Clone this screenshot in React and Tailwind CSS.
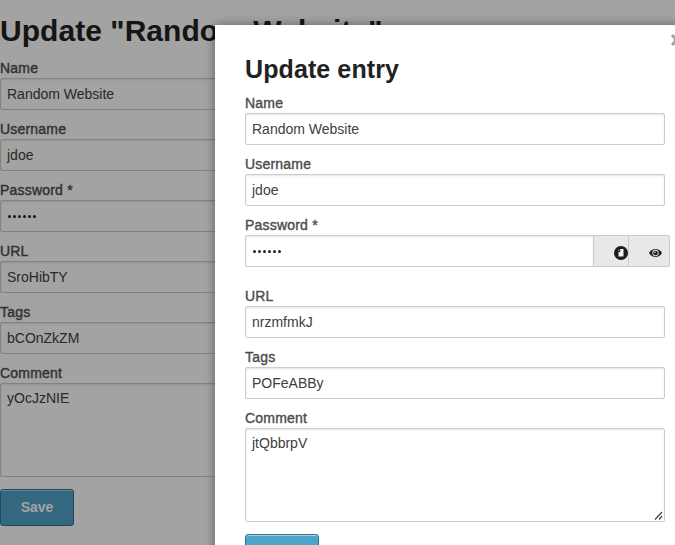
import React from "react";

const box =
  "border border-[#ccc] rounded-[2px] shadow-[inset_0_1px_2px_rgba(0,0,0,0.1)] bg-white text-[14px] leading-[17px] text-[#404040] px-1.5";

function Label({ children }) {
  return (
    <div className="h-[17px] whitespace-nowrap text-[14px] leading-[15px] tracking-[0.2px] text-[#4d4d4d] [-webkit-text-stroke:0.4px_#4d4d4d]">
      {children}
    </div>
  );
}

function Dots() {
  return (
    <div className="flex gap-[2px] pl-px">
      {[0, 1, 2, 3, 4, 5].map((i) => (
        <span key={i} className="size-[3px] rounded-full bg-[#222]" />
      ))}
    </div>
  );
}

function Field({ label, children }) {
  return (
    <div className="mb-3">
      <Label>{label}</Label>
      <div className={box + " flex h-8 items-center"}>{children}</div>
    </div>
  );
}

function Comment({ value, grip }) {
  return (
    <div className="mb-3">
      <Label>Comment</Label>
      <div className={box + " relative h-[94px] pt-[6px]"}>
        {value}
        {grip && (
          <svg className="absolute right-px bottom-px" width="9" height="9" viewBox="0 0 9 9" stroke="#444" strokeWidth="1.2" fill="none">
            <path d="M1 8.5 8 1M5 8.5 8 5" />
          </svg>
        )}
      </div>
    </div>
  );
}

function SaveButton({ textClass = "" }) {
  return (
    <button className={"block h-[37px] w-[74px] rounded-[3px] border border-[#33718f] bg-[#50a3c8] pb-px text-[14px] leading-[14px] font-bold text-white shadow-[inset_0_1px_0_rgba(255,255,255,0.5)] " + textClass}>
      Save
    </button>
  );
}

function CopyIcon() {
  return (
    <svg className="shrink-0" width="14" height="14" viewBox="0 0 14 14">
      <circle cx="7" cy="7" r="7" fill="#1c1c1c" />
      <path d="M6.2 3H9.5V10.5H4.5V6H6.2Z" fill="#f0f0f0" />
      <path d="M3.8 4.8 5.2 3.4V4.8Z" fill="#f0f0f0" />
    </svg>
  );
}

function EyeIcon() {
  return (
    <svg className="shrink-0" width="13" height="8" viewBox="0 0 13 8">
      <path d="M0 4C1.5 1.4 3.8 0 6.5 0S11.5 1.4 13 4C11.5 6.6 9.2 8 6.5 8S1.5 6.6 0 4Z" fill="#1c1c1c" />
      <circle cx="6.5" cy="4" r="3.2" fill="#e8e8e8" />
      <circle cx="6.5" cy="4" r="2.3" fill="#1c1c1c" />
      <circle cx="6" cy="3.3" r="0.8" fill="#ddd" />
    </svg>
  );
}

export default function App() {
  return (
    <div className="relative h-[545px] w-[675px] overflow-hidden bg-white font-['Liberation_Sans',Arial,sans-serif]">
      <main className="pt-[10px]">
        <h1 className="h-[51px] whitespace-nowrap text-[30px] leading-[42px] font-bold tracking-[0.05px] text-[#222]">
          Update "Random Website"
        </h1>
        <Field label="Name">Random Website</Field>
        <Field label="Username">jdoe</Field>
        <Field label="Password *"><Dots /></Field>
        <Field label="URL">SroHibTY</Field>
        <Field label="Tags">bCOnZkZM</Field>
        <Comment value="yOcJzNIE" />
        <SaveButton />
      </main>

      <div className="absolute inset-0 bg-black/36" />

      <section className="absolute top-[25px] left-[215px] h-[600px] w-[520px] bg-white pt-[27px] pl-[30px] shadow-[0_0_10px_rgba(0,0,0,0.4)]">
        <svg className="absolute top-[9px] left-[456px]" width="11" height="12" viewBox="0 0 11 12" stroke="#a3a3a3" strokeWidth="3.2" strokeLinecap="round">
          <path d="M2 2 9 10M9 2 2 10" />
        </svg>
        <div className="w-[420px]">
          <h2 className="h-[44px] text-[25px] leading-[35px] font-bold tracking-[0.1px] text-[#222]">Update entry</h2>
          <Field label="Name">Random Website</Field>
          <Field label="Username">jdoe</Field>
          <div className="mb-[22px]">
            <Label>Password *</Label>
            <div className="flex h-8 w-[425px]">
              <div className={box + " flex w-[349px] items-center rounded-r-none"}><Dots /></div>
              <div className="-ml-px flex w-9 items-center justify-end border border-[#ccc] bg-[#e8e8e8] pt-[3px]">
                <CopyIcon />
              </div>
              <div className="-ml-px flex w-[42px] items-center justify-end rounded-r-[2px] border border-[#ccc] bg-[#e8e8e8] pt-[3px] pr-[7px]">
                <EyeIcon />
              </div>
            </div>
          </div>
          <Field label="URL">nrzmfmkJ</Field>
          <Field label="Tags">POFeABBy</Field>
          <Comment value="jtQbbrpV" grip />
          <SaveButton textClass="pt-1" />
        </div>
      </section>
    </div>
  );
}
